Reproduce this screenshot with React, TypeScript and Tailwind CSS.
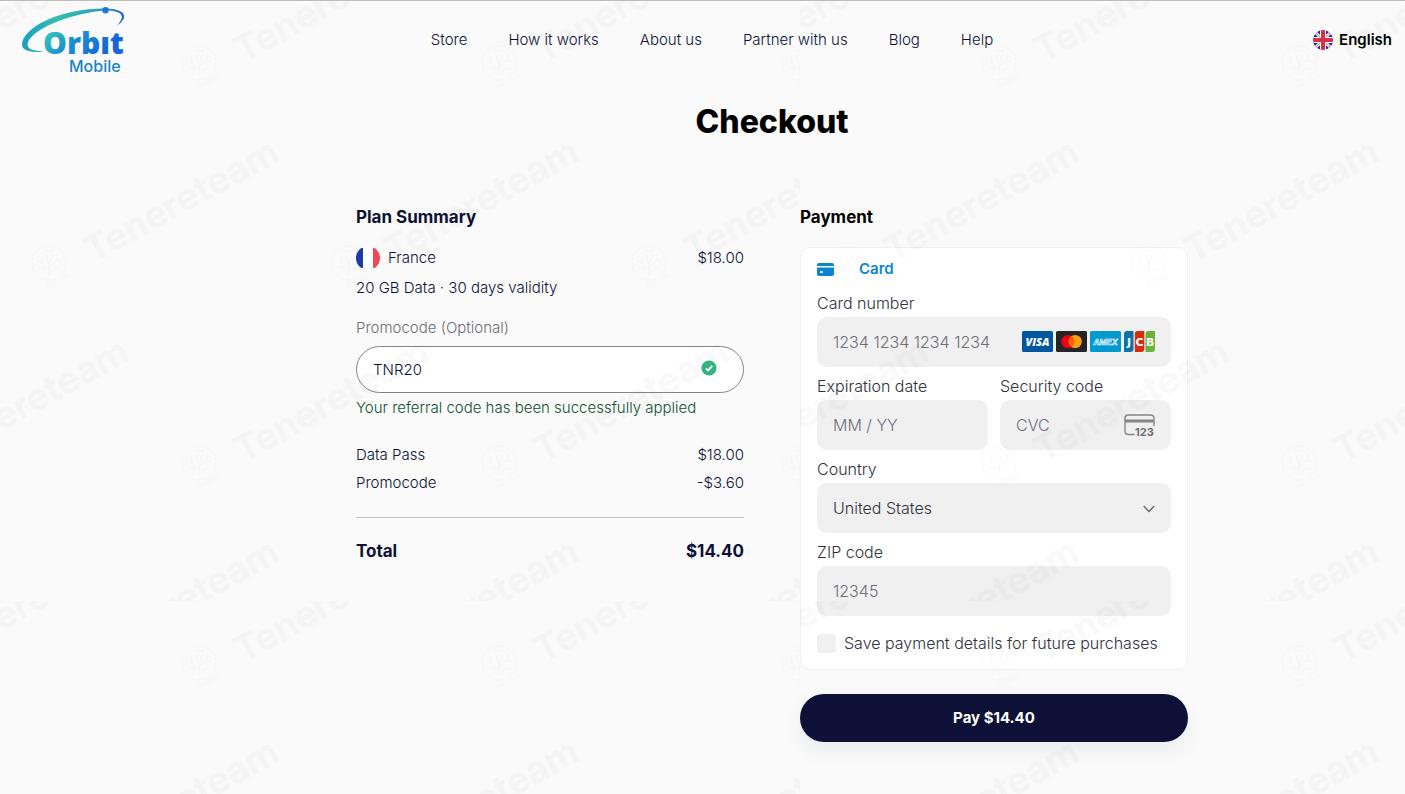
import { useState } from 'react';
import type { ReactNode } from 'react';

const navLinks = ['Store', 'How it works', 'About us', 'Partner with us', 'Blog', 'Help'];

const fieldClass =
  'h-[50px] w-full rounded-[10px] bg-[#f0f0f0] px-4 text-base text-[#30313d] outline-none placeholder:text-[#6d6e78]';

function Logo() {
  return (
    <svg viewBox="20 4 108 72" className="h-[72px] w-[108px]" role="img" aria-label="Orbit Mobile">
      <defs>
        <linearGradient id="ring" x1="22" y1="0" x2="124" y2="0" gradientUnits="userSpaceOnUse">
          <stop offset="0" stopColor="#1c9fc0" />
          <stop offset="0.35" stopColor="#35bfae" />
          <stop offset="0.75" stopColor="#2b9fc0" />
          <stop offset="1" stopColor="#1c62d6" />
        </linearGradient>
        <linearGradient id="word" x1="52" y1="28" x2="92" y2="66" gradientUnits="userSpaceOnUse">
          <stop offset="0" stopColor="#35c4b8" />
          <stop offset="0.45" stopColor="#1a8fd0" />
          <stop offset="1" stopColor="#1565dc" />
        </linearGradient>
      </defs>
      <path
        fill="url(#ring)"
        d="M44 51.4C30 53.2 20 50.5 22.3 42C27 25.5 62 8.6 104 8.6C119 8.4 126.5 13 123.6 19Q121.5 23 117 25.5Q122.5 19.5 121.8 16C120 10.5 108 10 100 11C66 15 35 29 28.5 41C25.5 48 30 51 44 51.4Z"
      />
      <circle cx="105.5" cy="10.3" r="3.2" fill="#1c74dc" />
      <text x="43" y="54" fill="url(#word)" className="font-['Open_Sans'] text-[30px] font-extrabold">
        Orbıt
      </text>
      <text x="69" y="72" fill="#1a83c4" className="font-['Inter'] text-[16px] font-medium">
        Mobile
      </text>
    </svg>
  );
}

function UkFlag() {
  return (
    <svg viewBox="0 0 20 20" className="size-5" aria-hidden="true">
      <clipPath id="uk">
        <circle cx="10" cy="10" r="10" />
      </clipPath>
      <g clipPath="url(#uk)">
        <rect width="20" height="20" fill="#1f2d8f" />
        <path d="M0 0L20 20M20 0L0 20" stroke="#fff" strokeWidth="3" />
        <path d="M0 0L20 20M20 0L0 20" stroke="#e8475e" strokeWidth="0.8" />
        <path d="M10 0V20M0 10H20" stroke="#fff" strokeWidth="6" />
        <path d="M10 0V20M0 10H20" stroke="#d8304a" strokeWidth="4" />
      </g>
    </svg>
  );
}

function FranceFlag() {
  return (
    <svg viewBox="0 0 24 20" className="h-5 w-6" aria-hidden="true">
      <clipPath id="fr">
        <circle cx="12" cy="10" r="12" />
      </clipPath>
      <g clipPath="url(#fr)">
        <rect width="24" height="20" fill="#fff" />
        <rect width="7" height="20" fill="#1c3aa9" />
        <rect x="17" width="7" height="20" fill="#ee4a5b" />
      </g>
    </svg>
  );
}

function CardBrands() {
  return (
    <div className="pointer-events-none absolute top-[14px] right-4 flex items-center gap-[3px]">
      <svg viewBox="0 0 31 21" className="h-[21px] w-[31px]" role="img" aria-label="Visa">
        <rect width="31" height="21" rx="1.5" fill="#00579f" />
        <text x="15.5" y="14.5" textAnchor="middle" fill="#fff" className="font-['Open_Sans'] text-[11px] font-extrabold italic">
          VISA
        </text>
      </svg>
      <svg viewBox="0 0 31 21" className="h-[21px] w-[31px]" role="img" aria-label="Mastercard">
        <rect width="31" height="21" rx="1.5" fill="#252525" />
        <circle cx="11.8" cy="10.5" r="6.6" fill="#eb001b" />
        <circle cx="19.2" cy="10.5" r="6.6" fill="#f79e1b" />
        <path d="M15.5 5A6.6 6.6 0 0 1 15.5 16A6.6 6.6 0 0 1 15.5 5Z" fill="#ff5f00" />
      </svg>
      <svg viewBox="0 0 31 21" className="h-[21px] w-[31px]" role="img" aria-label="American Express">
        <rect width="31" height="21" rx="1.5" fill="#0099cf" />
        <text
          x="15.5"
          y="13.5"
          textAnchor="middle"
          fill="#0099cf"
          stroke="#fff"
          strokeWidth="0.6"
          className="font-['Inter'] text-[8px] font-bold italic"
        >
          AMEX
        </text>
      </svg>
      <svg viewBox="0 0 31 21" className="h-[21px] w-[31px]" role="img" aria-label="JCB">
        <path d="M3 0H9.5V18Q9.5 21 6.5 21H0V3Q0 0 3 0Z" fill="#0e73ad" />
        <path d="M13.8 0H20.3V18Q20.3 21 17.3 21H10.8V3Q10.8 0 13.8 0Z" fill="#d42d0f" />
        <path d="M24.5 0H31V18Q31 21 28 21H21.5V3Q21.5 0 24.5 0Z" fill="#67b438" />
        <g fill="#fff" textAnchor="middle" className="font-['DejaVu_Sans'] text-[11px] font-bold">
          <text x="5" y="14.5">J</text>
          <text x="15.6" y="14.5">C</text>
          <text x="26.2" y="14.5">B</text>
        </g>
      </svg>
    </div>
  );
}

function CvcIcon() {
  return (
    <svg viewBox="0 0 31 26" className="pointer-events-none absolute top-[14px] right-4 h-[26px] w-[31px]" aria-hidden="true">
      <path
        d="M10.5 20.5H4.5Q1 20.5 1 17V4.5Q1 1 4.5 1H26.5Q30 1 30 4.5V12"
        fill="none"
        stroke="#858585"
        strokeWidth="1.4"
      />
      <rect x="1" y="5.5" width="29" height="3" fill="#858585" />
      <text x="11" y="22" fill="#6d6d6d" className="font-['Inter'] text-[11px] font-bold">
        123
      </text>
    </svg>
  );
}

function Field({ id, label, children }: { id: string; label: string; children: ReactNode }) {
  return (
    <div>
      <label htmlFor={id} className="mb-1 block text-base leading-5 text-[#30313d]">
        {label}
      </label>
      <div className="relative">{children}</div>
    </div>
  );
}

function Row({ label, value }: { label: string; value: string }) {
  return (
    <div className="flex justify-between leading-5">
      <span>{label}</span>
      <span>{value}</span>
    </div>
  );
}

// One stamp of the watermark: round seal followed by the slanted name
function Stamp({ x, y }: { x: number; y: number }) {
  return (
    <g transform={`translate(${x} ${y})`}>
      <g fill="none" stroke="#000" strokeWidth="1">
        <circle r="17" strokeDasharray="3 1" />
        <path d="M0 13V2M0 6L-7 0M0 4L8 -3M0 2L-3 -8M0 1L4 -9M-7 0L-12 -3M-7 0L-8 -7M8 -3L12 -1M8 -3L9 -9M-11 5Q-5 2 -3 8M11 6Q5 4 3 9M-4 -13Q0 -10 5 -13" />
      </g>
      <path d="M-2 24L20 12" stroke="#000" strokeWidth="4" strokeDasharray="3 1" opacity="0.5" />
      <text x="0" y="0" transform="translate(44 1) rotate(-29)" className="font-['Inter'] text-[37px] font-bold">
        Tenereteam
      </text>
    </g>
  );
}

function Watermark() {
  const rows = [
    { y: 62, xs: [-101, 199, 499, 799] },
    { y: 262, xs: [-251, 49, 349, 649] },
    { y: 462, xs: [-101, 199, 499, 799] },
    { y: 662, xs: [-251, 49, 349, 649] },
  ];

  return (
    <svg className="pointer-events-none absolute inset-0 size-full" aria-hidden="true">
      <defs>
        <pattern id="stamps" width="800" height="600" patternUnits="userSpaceOnUse">
          <g opacity="0.025">
            {rows.map((row) => row.xs.map((x) => <Stamp key={`${x}-${row.y}`} x={x} y={row.y} />))}
          </g>
        </pattern>
      </defs>
      <rect width="100%" height="100%" fill="url(#stamps)" />
    </svg>
  );
}

export default function App() {
  const [promo, setPromo] = useState('TNR20');
  const [save, setSave] = useState(false);

  return (
    <div className="relative min-h-screen overflow-hidden border-t border-[#bdbdbd] bg-[#fafafa] font-['Inter',sans-serif] text-[15px] font-light text-[#0d1137]">
      <header className="grid grid-cols-[1fr_auto_1fr] items-center pt-[3px] pr-[13px] pl-5">
        <a href="#" className="w-fit">
          <Logo />
        </a>
        <nav className="ml-3 flex gap-[41px]">
          {navLinks.map((link) => (
            <a key={link} href="#" className="leading-5">
              {link}
            </a>
          ))}
        </nav>
        <button type="button" className="flex items-center gap-[6px] justify-self-end font-semibold text-black">
          <UkFlag />
          English
        </button>
      </header>

      <main className="pb-[52px] pl-[139px]">
        <div className="mx-auto max-w-[832px]">
          <h1 className="mt-[26px] text-center text-[32px] leading-10 font-extrabold text-black">Checkout</h1>

          <div className="mt-[65px] grid grid-cols-2 gap-14">
            <section>
              <h2 className="text-[17px] leading-5 font-bold">Plan Summary</h2>
              <div className="mt-[21px] flex items-center leading-5">
                <FranceFlag />
                <span className="ml-2">France</span>
                <span className="ml-auto">$18.00</span>
              </div>
              <p className="mt-[10px] leading-5">20 GB Data · 30 days validity</p>

              <label htmlFor="promo" className="mt-5 block leading-5 text-[#6c6c70]">
                Promocode (Optional)
              </label>
              <div className="relative mt-2">
                <input
                  id="promo"
                  value={promo}
                  onChange={(e) => setPromo(e.target.value)}
                  className="h-[47px] w-full rounded-full border border-[#858585] bg-white px-4 outline-none"
                />
                <svg viewBox="0 0 16 16" className="absolute top-[14px] right-[27px] size-4" aria-hidden="true">
                  <circle cx="8" cy="8" r="7.5" fill="#35b384" />
                  <path d="M4.8 8.3L7 10.4L11.3 5.9" fill="none" stroke="#fff" strokeWidth="1.8" />
                </svg>
              </div>
              <p className="mt-[5px] leading-5 text-[#0f5132]">Your referral code has been successfully applied</p>

              <div className="mt-[27px] flex flex-col gap-2">
                <Row label="Data Pass" value="$18.00" />
                <Row label="Promocode" value="-$3.60" />
              </div>
              <hr className="mt-6 border-[#c4c4c6]" />
              <div className="mt-[23px] flex justify-between text-[17px] leading-5 font-bold">
                <span>Total</span>
                <span>$14.40</span>
              </div>
            </section>

            <section>
              <h2 className="text-[17px] leading-5 font-bold text-black">Payment</h2>
              <div className="mt-5 rounded-[10px] border border-[#f0f0f0] bg-white px-4 pt-[11px] pb-4">
                <div className="flex items-center leading-5 font-semibold text-[#0a85d6]">
                  <svg viewBox="0 0 17 13" className="h-[13px] w-[17px]" aria-hidden="true">
                    <path d="M2 0H15Q17 0 17 2V3H0V2Q0 0 2 0Z" fill="currentColor" />
                    <path d="M0 4.5H17V11Q17 13 15 13H2Q0 13 0 11Z" fill="currentColor" />
                    <rect x="3" y="8" width="3" height="2" rx="1" fill="#fff" />
                  </svg>
                  <span className="ml-[25px]">Card</span>
                </div>

                <form className="mt-[14px] flex flex-col gap-[9px]">
                  <Field id="number" label="Card number">
                    <input id="number" placeholder="1234 1234 1234 1234" className={fieldClass} />
                    <CardBrands />
                  </Field>
                  <div className="grid grid-cols-2 gap-3">
                    <Field id="expiry" label="Expiration date">
                      <input id="expiry" placeholder="MM / YY" className={fieldClass} />
                    </Field>
                    <Field id="cvc" label="Security code">
                      <input id="cvc" placeholder="CVC" className={fieldClass} />
                      <CvcIcon />
                    </Field>
                  </div>
                  <Field id="country" label="Country">
                    <select id="country" defaultValue="United States" className={`${fieldClass} appearance-none`}>
                      <option>United States</option>
                      <option>France</option>
                      <option>United Kingdom</option>
                    </select>
                    <svg viewBox="0 0 12 8" className="pointer-events-none absolute top-[22px] right-4 h-2 w-3" aria-hidden="true">
                      <path d="M0.7 1L6 6.5L11.3 1" fill="none" stroke="#6a6a6e" strokeWidth="1.5" />
                    </svg>
                  </Field>
                  <Field id="zip" label="ZIP code">
                    <input id="zip" placeholder="12345" className={fieldClass} />
                  </Field>
                  <label className="mt-2 flex items-center gap-2 text-base leading-5 text-[#30313d]">
                    <input
                      type="checkbox"
                      checked={save}
                      onChange={(e) => setSave(e.target.checked)}
                      className="size-[19px] appearance-none rounded-[4px] bg-[#f0f0f0] checked:bg-[#0a85d6]"
                    />
                    Save payment details for future purchases
                  </label>
                </form>
              </div>
              <button
                type="button"
                className="mt-6 h-12 w-full rounded-full bg-[#0d1137] text-[15px] font-bold text-white shadow-[0_8px_20px_rgba(20,60,80,0.08)]"
              >
                Pay $14.40
              </button>
            </section>
          </div>
        </div>
      </main>
      <Watermark />
    </div>
  );
}
